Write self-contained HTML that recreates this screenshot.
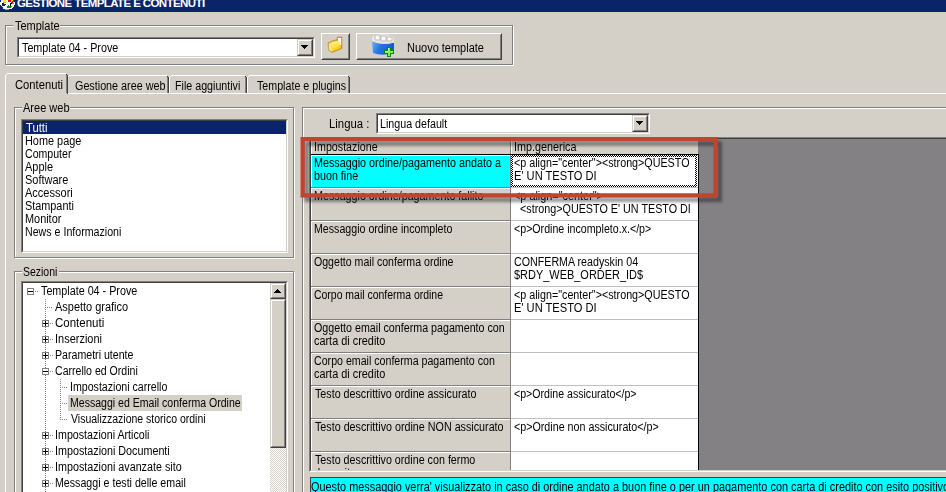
<!DOCTYPE html>
<html><head><meta charset="utf-8"><style>
html,body{margin:0;padding:0;}
body{width:946px;height:492px;overflow:hidden;position:relative;background:#D4D0C8;}
div,svg{position:absolute;box-sizing:border-box;}
.t{font-family:"Liberation Sans",sans-serif;font-size:12px;line-height:13px;white-space:pre;color:#000;transform-origin:0 0;}
</style></head><body>

<div style="left:0px;top:0px;width:946px;height:12px;background:#0A246A;"></div>
<div class="t" style="left:17px;top:-3px;color:#fff;font-weight:bold;font-size:11.5px;letter-spacing:-0.6px;">GESTIONE TEMPLATE E CONTENUTI</div>
<svg style="left:0;top:0" width="16" height="11" shape-rendering="crispEdges"><path d="M1 0h1v1h-1zM2 0h1v1h-1zM6 0h1v1h-1zM7 0h1v1h-1zM1 1h1v1h-1zM2 1h1v1h-1zM6 1h1v1h-1zM7 1h1v1h-1zM0 2h1v1h-1zM1 2h1v1h-1zM2 2h1v1h-1zM6 2h1v1h-1zM7 2h1v1h-1zM8 2h1v1h-1zM9 2h1v1h-1zM10 2h1v1h-1zM13 2h1v1h-1zM14 2h1v1h-1zM0 3h1v1h-1zM1 3h1v1h-1zM4 3h1v1h-1zM5 3h1v1h-1zM6 3h1v1h-1zM7 3h1v1h-1zM8 3h1v1h-1zM9 3h1v1h-1zM14 3h1v1h-1zM0 4h1v1h-1zM1 4h1v1h-1zM6 4h1v1h-1zM7 4h1v1h-1zM8 4h1v1h-1zM9 4h1v1h-1zM11 4h1v1h-1zM12 4h1v1h-1zM13 4h1v1h-1zM14 4h1v1h-1zM1 5h1v1h-1zM5 5h1v1h-1zM6 5h1v1h-1zM7 5h1v1h-1zM9 5h1v1h-1zM11 5h1v1h-1zM12 5h1v1h-1zM13 5h1v1h-1zM2 6h1v1h-1zM3 6h1v1h-1zM4 6h1v1h-1zM5 6h1v1h-1zM6 6h1v1h-1zM12 6h1v1h-1zM13 6h1v1h-1zM3 7h1v1h-1zM4 7h1v1h-1zM5 7h1v1h-1zM6 7h1v1h-1zM11 7h1v1h-1zM12 7h1v1h-1zM3 8h1v1h-1zM4 8h1v1h-1zM5 8h1v1h-1zM6 8h1v1h-1zM7 8h1v1h-1zM8 8h1v1h-1zM9 8h1v1h-1zM10 8h1v1h-1zM11 8h1v1h-1z" fill="#f4f4f4"/><path d="M3 0h1v1h-1zM4 0h1v1h-1zM5 0h1v1h-1zM11 0h1v1h-1zM12 0h1v1h-1zM3 1h1v1h-1zM4 1h1v1h-1zM5 1h1v1h-1zM11 1h1v1h-1z" fill="#f0f000"/><path d="M8 0h1v1h-1zM9 0h1v1h-1zM10 0h1v1h-1zM13 0h1v1h-1zM8 1h1v1h-1zM9 1h1v1h-1zM10 1h1v1h-1zM12 1h1v1h-1zM13 1h1v1h-1zM11 2h1v1h-1zM12 2h1v1h-1z" fill="#f00000"/><path d="M3 2h1v1h-1zM4 2h1v1h-1zM5 2h1v1h-1z" fill="#b8b800"/><path d="M10 3h1v1h-1zM11 3h1v1h-1zM10 4h1v1h-1zM10 5h1v1h-1z" fill="#000000"/><path d="M12 3h1v1h-1zM13 3h1v1h-1z" fill="#10a0a0"/><path d="M8 5h1v1h-1zM7 6h1v1h-1zM8 6h1v1h-1zM9 6h1v1h-1zM10 6h1v1h-1zM11 6h1v1h-1zM7 7h1v1h-1zM8 7h1v1h-1zM9 7h1v1h-1zM10 7h1v1h-1z" fill="#009000"/><path d="M5 9h1v1h-1zM6 9h1v1h-1zM7 9h1v1h-1zM8 9h1v1h-1z" fill="#a8a0b0"/></svg>
<div style="left:6px;top:26px;width:508px;height:40px;border:1px solid;border-color:#FFFFFF #FFFFFF #FFFFFF #FFFFFF;"></div>
<div style="left:5px;top:25px;width:508px;height:40px;border:1px solid;border-color:#808080 #808080 #808080 #808080;"></div>
<div style="left:13px;top:24px;width:47px;height:4px;background:#D4D0C8;"></div>
<div class="t" style="left:14.80px;top:20px;color:#000;transform:scaleX(0.9147);">Template</div>
<div style="left:17px;top:37px;width:298px;height:21px;border:1px solid;border-color:#808080 #FFFFFF #FFFFFF #808080;"></div>
<div style="left:18px;top:38px;width:296px;height:19px;border:1px solid;border-color:#404040 #D4D0C8 #D4D0C8 #404040;background:#FFFFFF;"></div>
<div style="left:297px;top:39px;width:16px;height:17px;border:1px solid;border-color:#D4D0C8 #404040 #404040 #D4D0C8;"></div>
<div style="left:298px;top:40px;width:14px;height:15px;border:1px solid;border-color:#FFFFFF #808080 #808080 #FFFFFF;background:#D4D0C8;"></div>
<svg style="left:301px;top:45px" width="7" height="4" shape-rendering="crispEdges"><path d="M0 0h7v1h-1v1h-1v1h-1v1h-1v-1h-1v-1h-1v-1h-1z" fill="#000"/></svg>
<div class="t" style="left:21.80px;top:42px;color:#000;transform:scaleX(0.8964);">Template 04 - Prove</div>
<div style="left:321px;top:33px;width:29px;height:27px;border:1px solid;border-color:#FFFFFF #404040 #404040 #FFFFFF;"></div>
<div style="left:322px;top:34px;width:27px;height:25px;border:1px solid;border-color:#D4D0C8 #808080 #808080 #D4D0C8;background:#D4D0C8;"></div>
<svg style="left:325px;top:35px" width="20" height="20"><defs><linearGradient id="fg" x1="0" y1="0" x2="0.4" y2="1"><stop offset="0" stop-color="#fff4a8"/><stop offset="0.6" stop-color="#ffe040"/><stop offset="1" stop-color="#e8b818"/></linearGradient></defs><path d="M3 8 L7 6 L12 4.5 L12.5 2 L17 2 L17 13.5 L7 17.5 L3.5 15 Z" fill="#d89c18" stroke="#c08a10" stroke-width="0.6"/><path d="M13 3 L16.2 3 L16.2 10.5 L13 8 Z" fill="#fffce8"/><path d="M3.8 8.5 L6.8 7 L7 16.8 L3.8 14.8 Z" fill="#f8e490"/><path d="M6.8 7 L13.5 5.5 L16.2 13 L7 16.8 Z" fill="url(#fg)"/></svg>
<div style="left:356px;top:33px;width:146px;height:27px;border:1px solid;border-color:#FFFFFF #404040 #404040 #FFFFFF;"></div>
<div style="left:357px;top:34px;width:144px;height:25px;border:1px solid;border-color:#D4D0C8 #808080 #808080 #D4D0C8;background:#D4D0C8;"></div>
<svg style="left:370px;top:33px" width="26" height="26"><defs><linearGradient id="bg1" x1="0" y1="0" x2="1" y2="0.3"><stop offset="0" stop-color="#60b8ff"/><stop offset="0.45" stop-color="#2a74e4"/><stop offset="1" stop-color="#1a58cc"/></linearGradient></defs><path d="M2 8 Q11 12.5 24 9.5 L24 19 Q14 24 3 20 Z" fill="url(#bg1)"/><path d="M2.5 4 L5 1.5 L10 1 L15 1.5 L19 2.5 L23.5 4 L24 9.5 Q11 12.5 2 8 Z" fill="#ececec"/><path d="M5 2 h5 v5 h-5z M11 3 h5 v5 h-5z M17 4 h5 v4 h-5z" fill="#f8f8f8" stroke="#b4b4b4" stroke-width="0.9"/><path d="M2.5 8 Q11 12 24 9.3" fill="none" stroke="#d8d8d8" stroke-width="1"/></svg>
<svg style="left:370px;top:33px" width="26" height="26" shape-rendering="crispEdges"><path d="M17 14H21V17H24V21H21V24H17V21H14V17H17Z" fill="#0a8a0a"/><path d="M18 15H20V18H23V20H20V23H18V20H15V18H18Z" fill="#80f058"/><path d="M18 15H19V18H15V19H18Z" fill="#c0ffa0"/></svg>
<div class="t" style="left:406.50px;top:42px;color:#000;transform:scaleX(0.9151);">Nuovo template</div>
<div style="left:5px;top:93px;width:941px;height:1px;background:#FFFFFF;"></div>
<div style="left:5px;top:93px;width:1px;height:399px;background:#FFFFFF;"></div>
<div style="left:69px;top:75px;width:98px;height:1px;background:#FFFFFF;"></div>
<div style="left:68px;top:76px;width:1px;height:1px;background:#FFFFFF;"></div>
<div style="left:67px;top:77px;width:1px;height:16px;background:#FFFFFF;"></div>
<div style="left:168px;top:77px;width:1px;height:16px;background:#404040;"></div>
<div style="left:167px;top:76px;width:1px;height:1px;background:#404040;"></div>
<div style="left:167px;top:77px;width:1px;height:16px;background:#808080;"></div>
<div class="t" style="left:75.00px;top:80px;color:#000;transform:scaleX(0.8974);">Gestione aree web</div>
<div style="left:171px;top:75px;width:74px;height:1px;background:#FFFFFF;"></div>
<div style="left:170px;top:76px;width:1px;height:1px;background:#FFFFFF;"></div>
<div style="left:169px;top:77px;width:1px;height:16px;background:#FFFFFF;"></div>
<div style="left:246px;top:77px;width:1px;height:16px;background:#404040;"></div>
<div style="left:245px;top:76px;width:1px;height:1px;background:#404040;"></div>
<div style="left:245px;top:77px;width:1px;height:16px;background:#808080;"></div>
<div class="t" style="left:175.00px;top:80px;color:#000;transform:scaleX(0.8904);">File aggiuntivi</div>
<div style="left:249px;top:75px;width:99px;height:1px;background:#FFFFFF;"></div>
<div style="left:248px;top:76px;width:1px;height:1px;background:#FFFFFF;"></div>
<div style="left:247px;top:77px;width:1px;height:16px;background:#FFFFFF;"></div>
<div style="left:349px;top:77px;width:1px;height:16px;background:#404040;"></div>
<div style="left:348px;top:76px;width:1px;height:1px;background:#404040;"></div>
<div style="left:348px;top:77px;width:1px;height:16px;background:#808080;"></div>
<div class="t" style="left:256.80px;top:80px;color:#000;transform:scaleX(0.8900);">Template e plugins</div>
<div style="left:5px;top:74px;width:62px;height:20px;background:#D4D0C8;"></div>
<div style="left:7px;top:73px;width:59px;height:1px;background:#FFFFFF;"></div>
<div style="left:6px;top:74px;width:1px;height:1px;background:#FFFFFF;"></div>
<div style="left:5px;top:75px;width:1px;height:19px;background:#FFFFFF;"></div>
<div style="left:67px;top:75px;width:1px;height:19px;background:#404040;"></div>
<div style="left:66px;top:74px;width:1px;height:1px;background:#404040;"></div>
<div style="left:66px;top:75px;width:1px;height:18px;background:#808080;"></div>
<div class="t" style="left:15.00px;top:79px;color:#000;transform:scaleX(0.9352);">Contenuti</div>
<div style="left:15px;top:108px;width:280px;height:151px;border:1px solid;border-color:#FFFFFF #FFFFFF #FFFFFF #FFFFFF;"></div>
<div style="left:14px;top:107px;width:280px;height:151px;border:1px solid;border-color:#808080 #808080 #808080 #808080;"></div>
<div style="left:22px;top:106px;width:48px;height:4px;background:#D4D0C8;"></div>
<div class="t" style="left:22.80px;top:102px;color:#000;transform:scaleX(0.9180);">Aree web</div>
<div style="left:21px;top:119px;width:267px;height:134px;border:1px solid;border-color:#808080 #FFFFFF #FFFFFF #808080;"></div>
<div style="left:22px;top:120px;width:265px;height:132px;border:1px solid;border-color:#404040 #D4D0C8 #D4D0C8 #404040;background:#FFFFFF;"></div>
<div style="left:23px;top:121px;width:263px;height:13px;background:#0A246A;"></div>
<div class="t" style="left:25.80px;top:122px;color:#fff;transform:scaleX(0.9392);">Tutti</div>
<div class="t" style="left:25.00px;top:135px;color:#000;transform:scaleX(0.9079);">Home page</div>
<div class="t" style="left:25.00px;top:148px;color:#000;transform:scaleX(0.8806);">Computer</div>
<div class="t" style="left:24.80px;top:161px;color:#000;transform:scaleX(0.9121);">Apple</div>
<div class="t" style="left:25.00px;top:174px;color:#000;transform:scaleX(0.9163);">Software</div>
<div class="t" style="left:24.80px;top:187px;color:#000;transform:scaleX(0.9182);">Accessori</div>
<div class="t" style="left:25.00px;top:200px;color:#000;transform:scaleX(0.9046);">Stampanti</div>
<div class="t" style="left:25.00px;top:213px;color:#000;transform:scaleX(0.9080);">Monitor</div>
<div class="t" style="left:25.00px;top:226px;color:#000;transform:scaleX(0.8866);">News e Informazioni</div>
<div style="left:15px;top:272px;width:280px;height:250px;border:1px solid;border-color:#FFFFFF #FFFFFF #FFFFFF #FFFFFF;"></div>
<div style="left:14px;top:271px;width:280px;height:250px;border:1px solid;border-color:#808080 #808080 #808080 #808080;"></div>
<div style="left:22px;top:270px;width:37px;height:4px;background:#D4D0C8;"></div>
<div class="t" style="left:23.00px;top:266px;color:#000;transform:scaleX(0.8718);">Sezioni</div>
<div style="left:21px;top:281px;width:267px;height:240px;border:1px solid;border-color:#808080 #FFFFFF #FFFFFF #808080;"></div>
<div style="left:22px;top:282px;width:265px;height:238px;border:1px solid;border-color:#404040 #D4D0C8 #D4D0C8 #404040;background:#FFFFFF;"></div>
<div style="left:270px;top:283px;width:16px;height:16px;border:1px solid;border-color:#D4D0C8 #404040 #404040 #D4D0C8;"></div>
<div style="left:271px;top:284px;width:14px;height:14px;border:1px solid;border-color:#FFFFFF #808080 #808080 #FFFFFF;background:#D4D0C8;"></div>
<svg style="left:274px;top:289px" width="7" height="4" shape-rendering="crispEdges"><path d="M3 0h1v1h1v1h1v1h1v1h-7v-1h1v-1h1v-1h1z" fill="#000"/></svg>
<div style="left:270px;top:299px;width:16px;height:149px;border:1px solid;border-color:#D4D0C8 #404040 #404040 #D4D0C8;"></div>
<div style="left:271px;top:300px;width:14px;height:147px;border:1px solid;border-color:#FFFFFF #808080 #808080 #FFFFFF;background:#D4D0C8;"></div>
<div style="left:270px;top:448px;width:16px;height:50px;background:repeating-conic-gradient(#FFFFFF 0 25%, #D4D0C8 0 50%) 0 0/2px 2px;"></div>
<div style="left:68px;top:395px;width:174px;height:16px;background:#D4D0C8;"></div>
<svg style="left:0;top:0" width="300" height="492" shape-rendering="crispEdges"><path d="M35 291h1v1h-1zM37 291h1v1h-1zM47 307h1v1h-1zM49 307h1v1h-1zM51 307h1v1h-1zM50 323h1v1h-1zM52 323h1v1h-1zM50 339h1v1h-1zM52 339h1v1h-1zM50 355h1v1h-1zM52 355h1v1h-1zM50 371h1v1h-1zM52 371h1v1h-1zM62 387h1v1h-1zM64 387h1v1h-1zM66 387h1v1h-1zM62 403h1v1h-1zM64 403h1v1h-1zM66 403h1v1h-1zM62 419h1v1h-1zM64 419h1v1h-1zM66 419h1v1h-1zM50 435h1v1h-1zM52 435h1v1h-1zM50 451h1v1h-1zM52 451h1v1h-1zM50 467h1v1h-1zM52 467h1v1h-1zM50 483h1v1h-1zM52 483h1v1h-1zM45 299h1v1h-1zM45 301h1v1h-1zM45 303h1v1h-1zM45 305h1v1h-1zM45 307h1v1h-1zM45 309h1v1h-1zM45 311h1v1h-1zM45 313h1v1h-1zM45 315h1v1h-1zM45 317h1v1h-1zM45 319h1v1h-1zM45 321h1v1h-1zM45 323h1v1h-1zM45 325h1v1h-1zM45 327h1v1h-1zM45 329h1v1h-1zM45 331h1v1h-1zM45 333h1v1h-1zM45 335h1v1h-1zM45 337h1v1h-1zM45 339h1v1h-1zM45 341h1v1h-1zM45 343h1v1h-1zM45 345h1v1h-1zM45 347h1v1h-1zM45 349h1v1h-1zM45 351h1v1h-1zM45 353h1v1h-1zM45 355h1v1h-1zM45 357h1v1h-1zM45 359h1v1h-1zM45 361h1v1h-1zM45 363h1v1h-1zM45 365h1v1h-1zM45 367h1v1h-1zM45 369h1v1h-1zM45 371h1v1h-1zM45 373h1v1h-1zM45 375h1v1h-1zM45 377h1v1h-1zM45 379h1v1h-1zM45 381h1v1h-1zM45 383h1v1h-1zM45 385h1v1h-1zM45 387h1v1h-1zM45 389h1v1h-1zM45 391h1v1h-1zM45 393h1v1h-1zM45 395h1v1h-1zM45 397h1v1h-1zM45 399h1v1h-1zM45 401h1v1h-1zM45 403h1v1h-1zM45 405h1v1h-1zM45 407h1v1h-1zM45 409h1v1h-1zM45 411h1v1h-1zM45 413h1v1h-1zM45 415h1v1h-1zM45 417h1v1h-1zM45 419h1v1h-1zM45 421h1v1h-1zM45 423h1v1h-1zM45 425h1v1h-1zM45 427h1v1h-1zM45 429h1v1h-1zM45 431h1v1h-1zM45 433h1v1h-1zM45 435h1v1h-1zM45 437h1v1h-1zM45 439h1v1h-1zM45 441h1v1h-1zM45 443h1v1h-1zM45 445h1v1h-1zM45 447h1v1h-1zM45 449h1v1h-1zM45 451h1v1h-1zM45 453h1v1h-1zM45 455h1v1h-1zM45 457h1v1h-1zM45 459h1v1h-1zM45 461h1v1h-1zM45 463h1v1h-1zM45 465h1v1h-1zM45 467h1v1h-1zM45 469h1v1h-1zM45 471h1v1h-1zM45 473h1v1h-1zM45 475h1v1h-1zM45 477h1v1h-1zM45 479h1v1h-1zM45 481h1v1h-1zM45 483h1v1h-1zM45 485h1v1h-1zM45 487h1v1h-1zM45 489h1v1h-1zM45 491h1v1h-1zM60 379h1v1h-1zM60 381h1v1h-1zM60 383h1v1h-1zM60 385h1v1h-1zM60 387h1v1h-1zM60 389h1v1h-1zM60 391h1v1h-1zM60 393h1v1h-1zM60 395h1v1h-1zM60 397h1v1h-1zM60 399h1v1h-1zM60 401h1v1h-1zM60 403h1v1h-1zM60 405h1v1h-1zM60 407h1v1h-1zM60 409h1v1h-1zM60 411h1v1h-1zM60 413h1v1h-1zM60 415h1v1h-1zM60 417h1v1h-1zM60 419h1v1h-1z" fill="#808080"/><rect x="27" y="288" width="7" height="7" fill="#fff"/><path d="M27 288h7v7h-7zM28 289v5h5v-5z" fill="#808080" fill-rule="evenodd"/><rect x="28" y="291" width="5" height="1" fill="#000"/><rect x="42" y="320" width="7" height="7" fill="#fff"/><path d="M42 320h7v7h-7zM43 321v5h5v-5z" fill="#808080" fill-rule="evenodd"/><rect x="43" y="323" width="5" height="1" fill="#000"/><rect x="45" y="321" width="1" height="5" fill="#000"/><rect x="42" y="336" width="7" height="7" fill="#fff"/><path d="M42 336h7v7h-7zM43 337v5h5v-5z" fill="#808080" fill-rule="evenodd"/><rect x="43" y="339" width="5" height="1" fill="#000"/><rect x="45" y="337" width="1" height="5" fill="#000"/><rect x="42" y="352" width="7" height="7" fill="#fff"/><path d="M42 352h7v7h-7zM43 353v5h5v-5z" fill="#808080" fill-rule="evenodd"/><rect x="43" y="355" width="5" height="1" fill="#000"/><rect x="45" y="353" width="1" height="5" fill="#000"/><rect x="42" y="368" width="7" height="7" fill="#fff"/><path d="M42 368h7v7h-7zM43 369v5h5v-5z" fill="#808080" fill-rule="evenodd"/><rect x="43" y="371" width="5" height="1" fill="#000"/><rect x="42" y="432" width="7" height="7" fill="#fff"/><path d="M42 432h7v7h-7zM43 433v5h5v-5z" fill="#808080" fill-rule="evenodd"/><rect x="43" y="435" width="5" height="1" fill="#000"/><rect x="45" y="433" width="1" height="5" fill="#000"/><rect x="42" y="448" width="7" height="7" fill="#fff"/><path d="M42 448h7v7h-7zM43 449v5h5v-5z" fill="#808080" fill-rule="evenodd"/><rect x="43" y="451" width="5" height="1" fill="#000"/><rect x="45" y="449" width="1" height="5" fill="#000"/><rect x="42" y="464" width="7" height="7" fill="#fff"/><path d="M42 464h7v7h-7zM43 465v5h5v-5z" fill="#808080" fill-rule="evenodd"/><rect x="43" y="467" width="5" height="1" fill="#000"/><rect x="45" y="465" width="1" height="5" fill="#000"/><rect x="42" y="480" width="7" height="7" fill="#fff"/><path d="M42 480h7v7h-7zM43 481v5h5v-5z" fill="#808080" fill-rule="evenodd"/><rect x="43" y="483" width="5" height="1" fill="#000"/><rect x="45" y="481" width="1" height="5" fill="#000"/></svg>
<div class="t" style="left:40.80px;top:285px;color:#000;transform:scaleX(0.8964);">Template 04 - Prove</div>
<div class="t" style="left:54.80px;top:301px;color:#000;transform:scaleX(0.9135);">Aspetto grafico</div>
<div class="t" style="left:55.00px;top:317px;color:#000;transform:scaleX(0.9591);">Contenuti</div>
<div class="t" style="left:55.00px;top:333px;color:#000;transform:scaleX(0.9144);">Inserzioni</div>
<div class="t" style="left:55.00px;top:349px;color:#000;transform:scaleX(0.8845);">Parametri utente</div>
<div class="t" style="left:55.00px;top:365px;color:#000;transform:scaleX(0.8802);">Carrello ed Ordini</div>
<div class="t" style="left:70.00px;top:381px;color:#000;transform:scaleX(0.8843);">Impostazioni carrello</div>
<div class="t" style="left:70.00px;top:397px;color:#000;transform:scaleX(0.8795);">Messaggi ed Email conferma Ordine</div>
<div class="t" style="left:70.80px;top:413px;color:#000;transform:scaleX(0.8749);">Visualizzazione storico ordini</div>
<div class="t" style="left:55.00px;top:429px;color:#000;transform:scaleX(0.8911);">Impostazioni Articoli</div>
<div class="t" style="left:55.00px;top:445px;color:#000;transform:scaleX(0.8961);">Impostazioni Documenti</div>
<div class="t" style="left:55.00px;top:461px;color:#000;transform:scaleX(0.8956);">Impostazioni avanzate sito</div>
<div class="t" style="left:55.00px;top:477px;color:#000;transform:scaleX(0.8875);">Messaggi e testi delle email</div>
<div style="left:303px;top:108px;width:658px;height:413px;border:1px solid;border-color:#FFFFFF #FFFFFF #FFFFFF #FFFFFF;"></div>
<div style="left:302px;top:107px;width:658px;height:413px;border:1px solid;border-color:#808080 #808080 #808080 #808080;"></div>
<div class="t" style="left:329.00px;top:118px;color:#000;transform:scaleX(0.9460);">Lingua :</div>
<div style="left:376px;top:113px;width:274px;height:21px;border:1px solid;border-color:#808080 #FFFFFF #FFFFFF #808080;"></div>
<div style="left:377px;top:114px;width:272px;height:19px;border:1px solid;border-color:#404040 #D4D0C8 #D4D0C8 #404040;background:#FFFFFF;"></div>
<div style="left:632px;top:115px;width:16px;height:17px;border:1px solid;border-color:#D4D0C8 #404040 #404040 #D4D0C8;"></div>
<div style="left:633px;top:116px;width:14px;height:15px;border:1px solid;border-color:#FFFFFF #808080 #808080 #FFFFFF;background:#D4D0C8;"></div>
<svg style="left:636px;top:121px" width="7" height="4" shape-rendering="crispEdges"><path d="M0 0h7v1h-1v1h-1v1h-1v1h-1v-1h-1v-1h-1v-1h-1z" fill="#000"/></svg>
<div class="t" style="left:380.00px;top:118px;color:#000;transform:scaleX(0.8912);">Lingua default</div>
<div style="left:309px;top:137px;width:652px;height:335px;border:1px solid;border-color:#808080 #FFFFFF #FFFFFF #808080;"></div>
<div style="left:310px;top:138px;width:650px;height:333px;border:1px solid;border-color:#404040 #D4D0C8 #D4D0C8 #404040;background:#848185;"></div>
<div style="left:311px;top:139px;width:199px;height:15px;background:#D4D0C8;"></div>
<div style="left:311px;top:139px;width:199px;height:1px;background:#FFFFFF;"></div>
<div style="left:311px;top:139px;width:1px;height:15px;background:#FFFFFF;"></div>
<div style="left:511px;top:139px;width:187px;height:15px;background:#D4D0C8;"></div>
<div style="left:511px;top:139px;width:187px;height:1px;background:#FFFFFF;"></div>
<div style="left:511px;top:139px;width:1px;height:15px;background:#FFFFFF;"></div>
<div style="left:510px;top:139px;width:1px;height:15px;background:#808080;"></div>
<div style="left:311px;top:154px;width:388px;height:1px;background:#000;"></div>
<div class="t" style="left:314.00px;top:141px;color:#000;transform:scaleX(0.8919);">Impostazione</div>
<div class="t" style="left:514.00px;top:141px;color:#000;transform:scaleX(0.9004);">Imp.generica</div>
<div style="left:311px;top:155px;width:388px;height:315px;overflow:hidden;">
<div style="left:0px;top:0px;width:199px;height:32px;background:#00FFFF;"></div>
<div style="left:0px;top:0px;width:199px;height:1px;background:#FFFFFF;"></div>
<div style="left:0px;top:0px;width:1px;height:32px;background:#FFFFFF;"></div>
<div style="left:199px;top:0px;width:1px;height:33px;background:#808080;"></div>
<div style="left:200px;top:0px;width:187px;height:32px;background:#FFFFFF;"></div>
<div style="left:0px;top:32px;width:199px;height:1px;background:#808080;"></div>
<div style="left:200px;top:32px;width:187px;height:1px;background:#C0C0C0;"></div>
<div class="t" style="left:3.00px;top:2px;color:#000;transform:scaleX(0.8981);">Messaggio ordine/pagamento andato a</div>
<div class="t" style="left:3.00px;top:15px;color:#000;transform:scaleX(0.8949);">buon fine</div>
<div class="t" style="left:203.00px;top:2px;color:#000;transform:scaleX(0.8951);">&lt;p align=&quot;center&quot;&gt;&lt;strong&gt;QUESTO</div>
<div class="t" style="left:203.00px;top:15px;color:#000;transform:scaleX(0.9258);">E&#x27; UN TESTO DI</div>
<div style="left:0px;top:33px;width:199px;height:32px;background:#D4D0C8;"></div>
<div style="left:0px;top:33px;width:199px;height:1px;background:#FFFFFF;"></div>
<div style="left:0px;top:33px;width:1px;height:32px;background:#FFFFFF;"></div>
<div style="left:199px;top:33px;width:1px;height:33px;background:#808080;"></div>
<div style="left:200px;top:33px;width:187px;height:32px;background:#FFFFFF;"></div>
<div style="left:0px;top:65px;width:199px;height:1px;background:#808080;"></div>
<div style="left:200px;top:65px;width:187px;height:1px;background:#C0C0C0;"></div>
<div class="t" style="left:3.00px;top:35px;color:#000;transform:scaleX(0.8942);">Messaggio ordine/pagamento fallito</div>
<div class="t" style="left:203.00px;top:35px;color:#000;transform:scaleX(0.9053);">&lt;p align=&quot;center&quot;&gt;</div>
<div class="t" style="left:203.00px;top:48px;color:#000;transform:scaleX(0.8977);">  &lt;strong&gt;QUESTO E&#x27; UN TESTO DI</div>
<div style="left:0px;top:66px;width:199px;height:32px;background:#D4D0C8;"></div>
<div style="left:0px;top:66px;width:199px;height:1px;background:#FFFFFF;"></div>
<div style="left:0px;top:66px;width:1px;height:32px;background:#FFFFFF;"></div>
<div style="left:199px;top:66px;width:1px;height:33px;background:#808080;"></div>
<div style="left:200px;top:66px;width:187px;height:32px;background:#FFFFFF;"></div>
<div style="left:0px;top:98px;width:199px;height:1px;background:#808080;"></div>
<div style="left:200px;top:98px;width:187px;height:1px;background:#C0C0C0;"></div>
<div class="t" style="left:3.00px;top:68px;color:#000;transform:scaleX(0.8863);">Messaggio ordine incompleto</div>
<div class="t" style="left:203.00px;top:68px;color:#000;transform:scaleX(0.8867);">&lt;p&gt;Ordine incompleto.x.&lt;/p&gt;</div>
<div style="left:0px;top:99px;width:199px;height:32px;background:#D4D0C8;"></div>
<div style="left:0px;top:99px;width:199px;height:1px;background:#FFFFFF;"></div>
<div style="left:0px;top:99px;width:1px;height:32px;background:#FFFFFF;"></div>
<div style="left:199px;top:99px;width:1px;height:33px;background:#808080;"></div>
<div style="left:200px;top:99px;width:187px;height:32px;background:#FFFFFF;"></div>
<div style="left:0px;top:131px;width:199px;height:1px;background:#808080;"></div>
<div style="left:200px;top:131px;width:187px;height:1px;background:#C0C0C0;"></div>
<div class="t" style="left:3.00px;top:101px;color:#000;transform:scaleX(0.8820);">Oggetto mail conferma ordine</div>
<div class="t" style="left:203.00px;top:101px;color:#000;transform:scaleX(0.8902);">CONFERMA readyskin 04</div>
<div class="t" style="left:203.00px;top:114px;color:#000;transform:scaleX(0.9129);">$RDY_WEB_ORDER_ID$</div>
<div style="left:0px;top:132px;width:199px;height:32px;background:#D4D0C8;"></div>
<div style="left:0px;top:132px;width:199px;height:1px;background:#FFFFFF;"></div>
<div style="left:0px;top:132px;width:1px;height:32px;background:#FFFFFF;"></div>
<div style="left:199px;top:132px;width:1px;height:33px;background:#808080;"></div>
<div style="left:200px;top:132px;width:187px;height:32px;background:#FFFFFF;"></div>
<div style="left:0px;top:164px;width:199px;height:1px;background:#808080;"></div>
<div style="left:200px;top:164px;width:187px;height:1px;background:#C0C0C0;"></div>
<div class="t" style="left:3.00px;top:134px;color:#000;transform:scaleX(0.8709);">Corpo mail conferma ordine</div>
<div class="t" style="left:203.00px;top:134px;color:#000;transform:scaleX(0.8951);">&lt;p align=&quot;center&quot;&gt;&lt;strong&gt;QUESTO</div>
<div class="t" style="left:203.00px;top:147px;color:#000;transform:scaleX(0.9258);">E&#x27; UN TESTO DI</div>
<div style="left:0px;top:165px;width:199px;height:32px;background:#D4D0C8;"></div>
<div style="left:0px;top:165px;width:199px;height:1px;background:#FFFFFF;"></div>
<div style="left:0px;top:165px;width:1px;height:32px;background:#FFFFFF;"></div>
<div style="left:199px;top:165px;width:1px;height:33px;background:#808080;"></div>
<div style="left:200px;top:165px;width:187px;height:32px;background:#FFFFFF;"></div>
<div style="left:0px;top:197px;width:199px;height:1px;background:#808080;"></div>
<div style="left:200px;top:197px;width:187px;height:1px;background:#C0C0C0;"></div>
<div class="t" style="left:3.00px;top:167px;color:#000;transform:scaleX(0.8908);">Oggetto email conferma pagamento con</div>
<div class="t" style="left:3.00px;top:180px;color:#000;transform:scaleX(0.9069);">carta di credito</div>
<div style="left:0px;top:198px;width:199px;height:32px;background:#D4D0C8;"></div>
<div style="left:0px;top:198px;width:199px;height:1px;background:#FFFFFF;"></div>
<div style="left:0px;top:198px;width:1px;height:32px;background:#FFFFFF;"></div>
<div style="left:199px;top:198px;width:1px;height:33px;background:#808080;"></div>
<div style="left:200px;top:198px;width:187px;height:32px;background:#FFFFFF;"></div>
<div style="left:0px;top:230px;width:199px;height:1px;background:#808080;"></div>
<div style="left:200px;top:230px;width:187px;height:1px;background:#C0C0C0;"></div>
<div class="t" style="left:3.00px;top:200px;color:#000;transform:scaleX(0.8858);">Corpo email conferma pagamento con</div>
<div class="t" style="left:3.00px;top:213px;color:#000;transform:scaleX(0.9069);">carta di credito</div>
<div style="left:0px;top:231px;width:199px;height:32px;background:#D4D0C8;"></div>
<div style="left:0px;top:231px;width:199px;height:1px;background:#FFFFFF;"></div>
<div style="left:0px;top:231px;width:1px;height:32px;background:#FFFFFF;"></div>
<div style="left:199px;top:231px;width:1px;height:33px;background:#808080;"></div>
<div style="left:200px;top:231px;width:187px;height:32px;background:#FFFFFF;"></div>
<div style="left:0px;top:263px;width:199px;height:1px;background:#808080;"></div>
<div style="left:200px;top:263px;width:187px;height:1px;background:#C0C0C0;"></div>
<div class="t" style="left:3.80px;top:233px;color:#000;transform:scaleX(0.8926);">Testo descrittivo ordine assicurato</div>
<div class="t" style="left:203.00px;top:233px;color:#000;transform:scaleX(0.8828);">&lt;p&gt;Ordine assicurato&lt;/p&gt;</div>
<div style="left:0px;top:264px;width:199px;height:32px;background:#D4D0C8;"></div>
<div style="left:0px;top:264px;width:199px;height:1px;background:#FFFFFF;"></div>
<div style="left:0px;top:264px;width:1px;height:32px;background:#FFFFFF;"></div>
<div style="left:199px;top:264px;width:1px;height:33px;background:#808080;"></div>
<div style="left:200px;top:264px;width:187px;height:32px;background:#FFFFFF;"></div>
<div style="left:0px;top:296px;width:199px;height:1px;background:#808080;"></div>
<div style="left:200px;top:296px;width:187px;height:1px;background:#C0C0C0;"></div>
<div class="t" style="left:3.80px;top:266px;color:#000;transform:scaleX(0.8948);">Testo descrittivo ordine NON assicurato</div>
<div class="t" style="left:203.00px;top:266px;color:#000;transform:scaleX(0.8927);">&lt;p&gt;Ordine non assicurato&lt;/p&gt;</div>
<div style="left:0px;top:297px;width:199px;height:32px;background:#D4D0C8;"></div>
<div style="left:0px;top:297px;width:199px;height:1px;background:#FFFFFF;"></div>
<div style="left:0px;top:297px;width:1px;height:32px;background:#FFFFFF;"></div>
<div style="left:199px;top:297px;width:1px;height:33px;background:#808080;"></div>
<div style="left:200px;top:297px;width:187px;height:32px;background:#FFFFFF;"></div>
<div style="left:0px;top:329px;width:199px;height:1px;background:#808080;"></div>
<div style="left:200px;top:329px;width:187px;height:1px;background:#C0C0C0;"></div>
<div class="t" style="left:3.80px;top:299px;color:#000;transform:scaleX(0.8934);">Testo descrittivo ordine con fermo</div>
<div class="t" style="left:3.00px;top:312px;color:#000;transform:scaleX(0.9300);">deposito</div>
<div style="left:387px;top:0px;width:1px;height:321px;background:#000;"></div>
<div style="left:200px;top:0px;width:186px;height:2px;background:repeating-conic-gradient(#000 0 25%,#fff 0 50%) 0 0/2px 2px;"></div>
<div style="left:200px;top:30px;width:186px;height:2px;background:repeating-conic-gradient(#000 0 25%,#fff 0 50%) 0 0/2px 2px;"></div>
<div style="left:200px;top:0px;width:2px;height:32px;background:repeating-conic-gradient(#000 0 25%,#fff 0 50%) 0 0/2px 2px;"></div>
<div style="left:384px;top:0px;width:2px;height:32px;background:repeating-conic-gradient(#000 0 25%,#fff 0 50%) 0 0/2px 2px;"></div>
</div>
<svg style="left:280px;top:120px" width="460" height="100"><defs><filter id="sh" x="-10%" y="-30%" width="120%" height="160%"><feGaussianBlur stdDeviation="1.5"/></filter></defs><rect x="26.6" y="23.6" width="413.1" height="56.2" fill="none" stroke="#000" stroke-opacity="0.40" stroke-width="4.6" filter="url(#sh)"/><rect x="22.7" y="19.15" width="412.8" height="56.25" fill="none" stroke="#BE4630" stroke-width="4.3"/></svg>
<div style="left:310px;top:477px;width:651px;height:44px;border:1px solid;border-color:#404040 #404040 #404040 #404040;background:#00FFFF;"></div>
<div class="t" style="left:311.00px;top:481px;color:#000;transform:scaleX(0.9081);">Questo messaggio verra&#x27; visualizzato in caso di ordine andato a buon fine o per un pagamento con carta di credito con esito positivo</div>
</body></html>
